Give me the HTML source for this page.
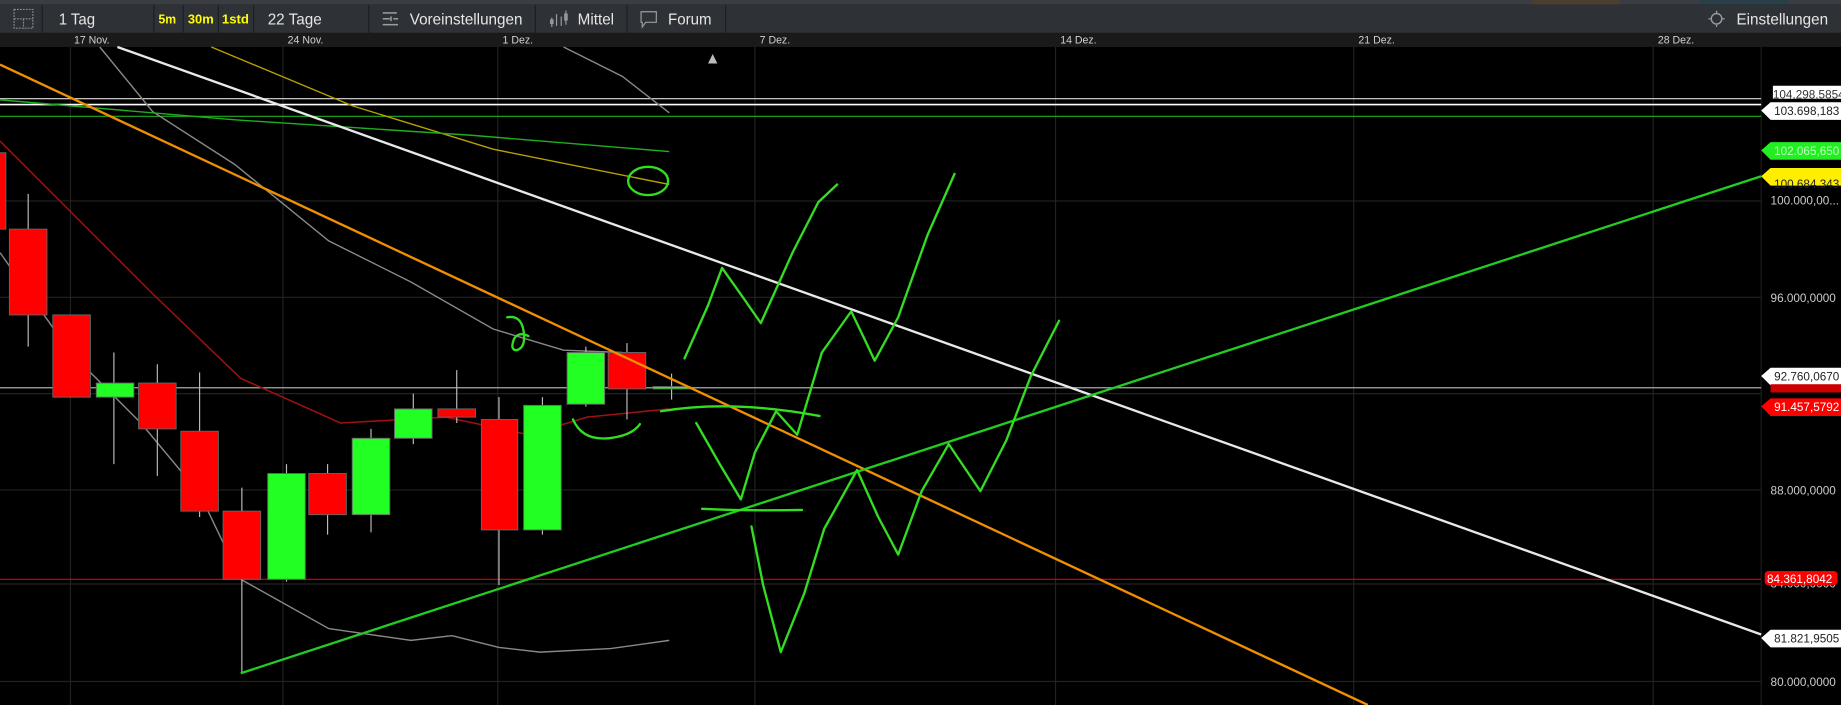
<!DOCTYPE html>
<html><head><meta charset="utf-8"><style>
html,body{margin:0;padding:0;background:#000;overflow:hidden}
svg{display:block}
text{font-family:"Liberation Sans",sans-serif}
</style></head><body>
<svg width="1841" height="705" viewBox="0 0 1568 600" preserveAspectRatio="none" xmlns="http://www.w3.org/2000/svg">
<rect width="1568" height="600" fill="#000"/>
<rect x="0" y="0" width="1568" height="4" fill="#3a3d41"/>
<rect x="1305" y="0" width="75" height="4" fill="#4a4030"/>
<rect x="1448" y="0" width="75" height="4" fill="#2a4048"/>
<rect x="0" y="4" width="1568" height="24" fill="#2e3135"/>
<g stroke="#1c1e21" stroke-width="1">
<line x1="36" y1="4" x2="36" y2="28"/><line x1="131" y1="4" x2="131" y2="28"/><line x1="156" y1="4" x2="156" y2="28"/>
<line x1="186" y1="4" x2="186" y2="28"/><line x1="216" y1="4" x2="216" y2="28"/><line x1="314" y1="4" x2="314" y2="28"/>
<line x1="456" y1="4" x2="456" y2="28"/><line x1="534" y1="4" x2="534" y2="28"/><line x1="618" y1="4" x2="618" y2="28"/>
</g>
<rect x="12" y="8" width="16" height="16" fill="none" stroke="#8a8d90" stroke-width="1" stroke-dasharray="1.5,1"/>
<line x1="12" y1="16" x2="28" y2="16" stroke="#8a8d90" stroke-dasharray="1.5,1"/>
<line x1="20" y1="16" x2="20" y2="24" stroke="#8a8d90" stroke-dasharray="1.5,1"/>
<text x="50" y="21" font-size="13" fill="#e6e6e6" textLength="31" lengthAdjust="spacingAndGlyphs">1 Tag</text>
<text x="135" y="20" font-size="11" fill="#ffff00" font-weight="bold" textLength="15" lengthAdjust="spacingAndGlyphs">5m</text>
<text x="160" y="20" font-size="11" fill="#ffff00" font-weight="bold" textLength="22" lengthAdjust="spacingAndGlyphs">30m</text>
<text x="189" y="20" font-size="11" fill="#ffff00" font-weight="bold" textLength="23" lengthAdjust="spacingAndGlyphs">1std</text>
<text x="228" y="21" font-size="13" fill="#e6e6e6" textLength="46" lengthAdjust="spacingAndGlyphs">22 Tage</text>
<g stroke="#9a9da0" stroke-width="1.3"><line x1="326" y1="11" x2="338" y2="11"/><line x1="326" y1="16" x2="332" y2="16"/><line x1="335" y1="16" x2="339" y2="16"/><line x1="326" y1="21" x2="339" y2="21"/><line x1="333" y1="14" x2="333" y2="18"/></g>
<text x="349" y="21" font-size="13" fill="#e6e6e6" textLength="96" lengthAdjust="spacingAndGlyphs">Voreinstellungen</text>
<g stroke="#9a9da0" stroke-width="1"><line x1="470" y1="15" x2="470" y2="23"/><line x1="474" y1="12" x2="474" y2="22"/><line x1="478" y1="14" x2="478" y2="22"/><line x1="482" y1="9" x2="482" y2="21"/></g>
<g fill="none" stroke="#9a9da0"><rect x="469" y="17" width="2" height="3"/><rect x="481" y="12" width="2" height="5"/></g>
<text x="492" y="21" font-size="13" fill="#e6e6e6" textLength="31" lengthAdjust="spacingAndGlyphs">Mittel</text>
<path d="M546 10 h13 v9 h-9 l-3 4 v-4 h-1 z" fill="none" stroke="#9a9da0" stroke-width="1"/>
<text x="569" y="21" font-size="13" fill="#e6e6e6" textLength="37" lengthAdjust="spacingAndGlyphs">Forum</text>
<circle cx="1462" cy="16" r="4.5" fill="none" stroke="#9a9da0" stroke-width="1.2"/>
<g stroke="#9a9da0"><line x1="1455" y1="16" x2="1457" y2="16"/><line x1="1467" y1="16" x2="1469" y2="16"/><line x1="1462" y1="9" x2="1462" y2="11"/><line x1="1462" y1="21" x2="1462" y2="23"/></g>
<text x="1479" y="21" font-size="13" fill="#e6e6e6" textLength="78" lengthAdjust="spacingAndGlyphs">Einstellungen</text>
<rect x="0" y="28" width="1568" height="12" fill="#1a1a1a"/>
<g font-size="9" fill="#d0d0d0">
<text x="63" y="37">17 Nov.</text><text x="245" y="37">24 Nov.</text><text x="428" y="37">1 Dez.</text>
<text x="647" y="37">7 Dez.</text><text x="903" y="37">14 Dez.</text><text x="1157" y="37">21 Dez.</text><text x="1412" y="37">28 Dez.</text>
</g>
<g stroke="#222" stroke-width="1">
<line x1="60" y1="40" x2="60" y2="600"/><line x1="241" y1="40" x2="241" y2="600"/><line x1="424" y1="40" x2="424" y2="600"/>
<line x1="643" y1="40" x2="643" y2="600"/><line x1="899" y1="40" x2="899" y2="600"/><line x1="1153" y1="40" x2="1153" y2="600"/><line x1="1408" y1="40" x2="1408" y2="600"/>
<line x1="0" y1="171" x2="1500" y2="171"/><line x1="0" y1="253" x2="1500" y2="253"/><line x1="0" y1="335" x2="1500" y2="335"/>
<line x1="0" y1="417" x2="1500" y2="417"/><line x1="0" y1="497" x2="1500" y2="497"/><line x1="0" y1="580" x2="1500" y2="580"/>
</g>
<line x1="1500" y1="40" x2="1500" y2="600" stroke="#1e1e1e"/>
<path d="M603 54 l4-8 4 8z" fill="#bbb"/>
<line x1="0" y1="84" x2="1500" y2="84" stroke="#ddd"/>
<line x1="0" y1="89" x2="1500" y2="89" stroke="#fff" stroke-width="1.3"/>
<line x1="0" y1="99" x2="1500" y2="99" stroke="#1fae1f"/>
<line x1="0" y1="330" x2="1500" y2="330" stroke="#aaa"/>
<line x1="0" y1="493" x2="1500" y2="493" stroke="#d00"/>
<polyline points="480,40 530,65 570,96" fill="none" stroke="#888" stroke-width="1.2"/>
<polyline points="85,40 130,95 200,140 280,205 350,240 420,280 480,298 530,300" fill="none" stroke="#888" stroke-width="1.2"/>
<polyline points="0,215 60,300 120,360 170,420 205,493 280,535 350,545 385,541 425,551 460,555 520,552 570,545" fill="none" stroke="#888" stroke-width="1.2"/>
<polyline points="0,120 60,180 130,250 205,322 290,360 380,355 450,370 500,355 570,348" fill="none" stroke="#a01010" stroke-width="1.3"/>
<polyline points="180,40 300,90 420,127 570,157" fill="none" stroke="#b8a000" stroke-width="1.2"/>
<polyline points="0,85 200,102 400,115 570,129" fill="none" stroke="#1fae1f" stroke-width="1.2"/>
<g stroke="#bbb" stroke-width="1">
<line x1="24" y1="165" x2="24" y2="295"/><line x1="97" y1="300" x2="97" y2="395"/><line x1="134" y1="310" x2="134" y2="405"/>
<line x1="170" y1="317" x2="170" y2="440"/><line x1="206" y1="415" x2="206" y2="573"/><line x1="244" y1="395" x2="244" y2="495"/>
<line x1="279" y1="395" x2="279" y2="455"/><line x1="316" y1="365" x2="316" y2="453"/><line x1="352" y1="335" x2="352" y2="378"/>
<line x1="389" y1="315" x2="389" y2="360"/><line x1="425" y1="338" x2="425" y2="498"/><line x1="462" y1="338" x2="462" y2="455"/>
<line x1="499" y1="295" x2="499" y2="346"/><line x1="534" y1="292" x2="534" y2="357"/><line x1="572" y1="318" x2="572" y2="340"/>
</g>
<g stroke="#666" stroke-width="0.8">
<rect x="-2" y="130" width="7" height="65" fill="#f00"/>
<rect x="8" y="195" width="32" height="73" fill="#f00"/>
<rect x="45" y="268" width="32" height="70" fill="#f00"/>
<rect x="82" y="326" width="32" height="12" fill="#2f2"/>
<rect x="118" y="326" width="32" height="39" fill="#f00"/>
<rect x="154" y="367" width="32" height="68" fill="#f00"/>
<rect x="190" y="435" width="32" height="58" fill="#f00"/>
<rect x="228" y="403" width="32" height="90" fill="#2f2"/>
<rect x="263" y="403" width="32" height="35" fill="#f00"/>
<rect x="300" y="373" width="32" height="65" fill="#2f2"/>
<rect x="336" y="348" width="32" height="25" fill="#2f2"/>
<rect x="373" y="348" width="32" height="7" fill="#f00"/>
<rect x="410" y="357" width="31" height="94" fill="#f00"/>
<rect x="446" y="345" width="32" height="106" fill="#2f2"/>
<rect x="483" y="300" width="32" height="44" fill="#2f2"/>
<rect x="518" y="300" width="32" height="31" fill="#f00"/>
<rect x="556" y="329" width="32" height="2" fill="#2f2"/>
</g>
<line x1="100" y1="40" x2="1500" y2="540" stroke="#e8e8e8" stroke-width="2"/>
<line x1="0" y1="55" x2="1165" y2="600" stroke="#f09000" stroke-width="2"/>
<line x1="205" y1="573" x2="1500" y2="150" stroke="#22cc22" stroke-width="2"/>
<g fill="none" stroke="#33dd22" stroke-width="2" stroke-linecap="round" stroke-linejoin="round">
<ellipse cx="552" cy="154" rx="17" ry="12"/>
<path d="M432 270 q12 -2 14 12 q2 14 -6 16 q-6 0 -2 -10 q4 -6 12 -2"/>
<path d="M488 357 q8 18 30 16 q20 -2 27 -12"/>
<path d="M563 350 q60 -10 135 4"/>
<polyline points="583,305 603,260 615,228 632,252 648,275 675,215 697,172 713,157"/>
<polyline points="593,360 613,395 631,425 643,385 661,350 679,370 700,300 725,265 737,290 745,307 765,270 790,200 813,148"/>
<path d="M598 433 q40 2 85 1"/>
<polyline points="640,448 650,498 665,555 685,505 702,450 730,400 748,440 765,472 785,418 808,378 835,418 857,375 878,320 902,273"/>
</g>
<g font-size="10" fill="#ccc">
<text x="1508" y="174">100.000,00...</text><text x="1508" y="257">96.000,0000</text>
<text x="1508" y="421">88.000,0000</text><text x="1508" y="500">84.000,0000</text><text x="1508" y="584">80.000,0000</text>
</g>
<path d="M1510 73 h58 v11 h-58z" fill="#fff"/><text x="1510" y="84" font-size="10" fill="#333">104.298,5854</text>
<path d="M1500 94 l8 -7 h60 v15 h-60z" fill="#fff"/><text x="1511" y="98" font-size="10" fill="#222">103.698,183</text>
<path d="M1500 128 l8 -7 h60 v15 h-60z" fill="#22ee22"/><text x="1511" y="132" font-size="10" fill="#bfffbf">102.065,650</text>
<path d="M1500 150 l8 -7 h60 v15 h-60z" fill="#ffee00"/><text x="1511" y="160" font-size="10" fill="#222">100.684,343</text>
<path d="M1500 320 l8 -7 h60 v15 h-60z" fill="#fff"/><text x="1511" y="324" font-size="10" fill="#222">92.760,0670</text>
<rect x="1508" y="327" width="60" height="7" fill="#c00"/>
<path d="M1500 346 l8 -7 h60 v15 h-60z" fill="#f00"/><text x="1511" y="350" font-size="10" fill="#fff">91.457,5792</text>
<rect x="1503" y="486" width="62" height="12" rx="3" fill="#f00"/><text x="1505" y="496" font-size="10" fill="#fff">84.361,8042</text>
<path d="M1500 543 l8 -7 h60 v15 h-60z" fill="#fff"/><text x="1511" y="547" font-size="10" fill="#222">81.821,9505</text>
</svg>
</body></html>
